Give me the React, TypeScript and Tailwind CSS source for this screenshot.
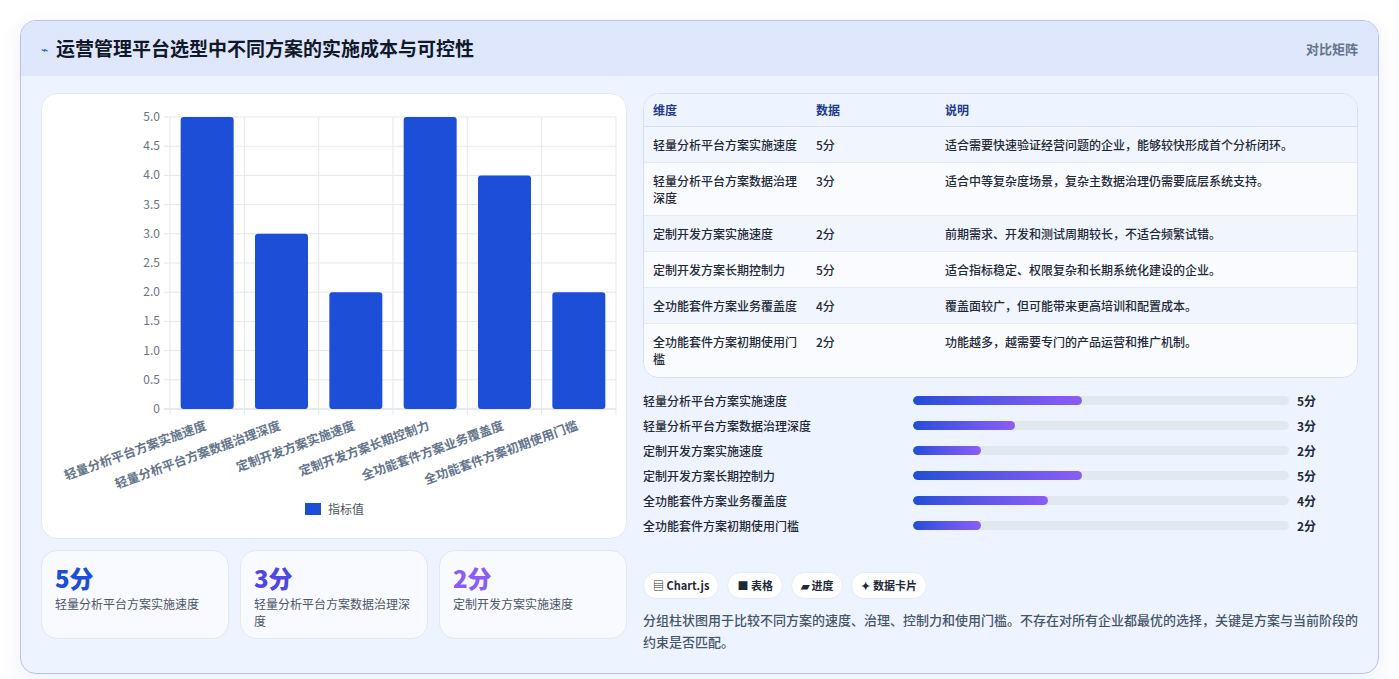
const rows = [
  { name: "轻量分析平台方案实施速度", v: 5, note: "适合需要快速验证经营问题的企业，能够较快形成首个分析闭环。" },
  { name: "轻量分析平台方案数据治理深度", v: 3, note: "适合中等复杂度场景，复杂主数据治理仍需要底层系统支持。" },
  { name: "定制开发方案实施速度", v: 2, note: "前期需求、开发和测试周期较长，不适合频繁试错。" },
  { name: "定制开发方案长期控制力", v: 5, note: "适合指标稳定、权限复杂和长期系统化建设的企业。" },
  { name: "全功能套件方案业务覆盖度", v: 4, note: "覆盖面较广，但可能带来更高培训和配置成本。" },
  { name: "全功能套件方案初期使用门槛", v: 2, note: "功能越多，越需要专门的产品运营和推广机制。" },
];

const font = { fontFamily: '"Noto Sans CJK SC", "Liberation Sans", sans-serif' };

function Chart() {
  const x0 = 128, x1 = 574, y0 = 23, y1 = 315;
  const cw = (x1 - x0) / 6;
  const ticks = [0, 0.5, 1, 1.5, 2, 2.5, 3, 3.5, 4, 4.5, 5];
  const yy = (v: number) => y1 - (v / 5) * (y1 - y0);
  return (
    <svg width="586" height="445" style={font}>
      {ticks.map((t) => (
        <g key={t}>
          <line x1={x0 - 6} x2={x1} y1={yy(t)} y2={yy(t)} stroke={t === 0 ? "#cbd5e1" : "#e5e7eb"} />
          <text x={x0 - 10} y={yy(t) + 4} fontSize="12" fill="#6b7280" textAnchor="end">{t === 0 ? "0" : t.toFixed(1)}</text>
        </g>
      ))}
      {Array.from({ length: 7 }).map((_, i) => (
        <line key={i} x1={x0 + i * cw} x2={x0 + i * cw} y1={y0} y2={y1 + 6} stroke="#e5e7eb" />
      ))}
      {rows.map((r, i) => {
        const cx = x0 + cw * i + cw / 2;
        return (
          <g key={r.name}>
            <rect x={cx - 26.5} y={yy(r.v)} width="53" height={y1 - yy(r.v)} rx="3" fill="#1d4ed8" />
            <text x={cx} y={y1 + 20} fontSize="12.5" fontWeight="600" fill="#64748b" textAnchor="end" transform={`rotate(-20 ${cx} ${y1 + 20})`}>{r.name}</text>
          </g>
        );
      })}
      <rect x="263" y="409" width="16" height="12" fill="#1d4ed8" />
      <text x="286" y="420" fontSize="12" fill="#4b5563">指标值</text>
    </svg>
  );
}

export default function App() {
  const stats = [
    { v: "5分", c: "text-[#1d4ed8]", l: "轻量分析平台方案实施速度" },
    { v: "3分", c: "text-[#4f46e5]", l: "轻量分析平台方案数据治理深度" },
    { v: "2分", c: "text-[#8b5cf6]", l: "定制开发方案实施速度" },
  ];
  return (
    <div className="min-h-[679px] bg-white p-5" style={font}>
      <div className="rounded-2xl border border-[#b6c3ee] bg-[#eef4ff] overflow-hidden shadow-[0_8px_24px_rgba(30,64,175,0.08)]">
        <div className="h-[55px] bg-[#dfe7fd] flex items-center justify-between px-5">
          <div className="flex items-center gap-2">
            <span className="text-[#1d4ed8] text-xs">⌁</span>
            <h1 className="text-[19px] font-bold text-[#111827]">运营管理平台选型中不同方案的实施成本与可控性</h1>
          </div>
          <span className="text-[13px] text-[#64748b] font-semibold">对比矩阵</span>
        </div>
        <div className="flex gap-4 px-5 pt-[17px] pb-5">
          <div className="w-[586px] flex flex-col gap-[11px]">
            <div className="bg-white rounded-2xl border border-[#e2e8f0] h-[446px]">
              <Chart />
            </div>
            <div className="grid grid-cols-3 gap-[11px]">
              {stats.map((s) => (
                <div key={s.v} className="bg-[#f8faff] rounded-2xl border border-[#e2e8f0] h-[89px] px-[13px] pt-3">
                  <div className={`text-[24px] font-extrabold leading-[30px] ${s.c}`}>{s.v}</div>
                  <div className="text-xs text-[#4b5563] leading-[17px] mt-[2px]">{s.l}</div>
                </div>
              ))}
            </div>
          </div>
          <div className="flex-1 flex flex-col">
            <div className="rounded-2xl border border-[#d7def0] overflow-hidden bg-white text-xs">
              <div className="flex h-[33px] items-center bg-[#eef4ff] border-b border-[#d7def0] font-bold text-[#1e3a8a]">
                <div className="w-[172px] pl-[9px]">维度</div>
                <div className="w-[129px]">数据</div>
                <div>说明</div>
              </div>
              {rows.map((r, i) => (
                <div key={r.name} className={`flex py-[9px] leading-[17px] text-[#1f2937] font-medium border-b border-[#e5eaf5] last:border-b-0 ${i % 2 === 0 ? "bg-[#f1f5fe]" : "bg-[#f9fbff]"} ${i === 5 ? "pb-[10px]" : ""}`}>
                  <div className="w-[172px] pl-[9px] pr-3">{r.name}</div>
                  <div className="w-[129px]">{r.v}分</div>
                  <div className="flex-1">{r.note}</div>
                </div>
              ))}
            </div>
            <div className="mt-[10px] flex flex-col">
              {rows.map((r) => (
                <div key={r.name} className="flex items-center h-[25px] text-xs font-medium text-[#1f2937]">
                  <div className="w-[270px]">{r.name}</div>
                  <div className="w-[376px] h-[9px] rounded-full bg-[#e2e8f0] overflow-hidden">
                    <div className="h-full rounded-full bg-gradient-to-r from-[#1d4ed8] to-[#8b5cf6]" style={{ width: `${r.v * 9}%` }} />
                  </div>
                  <div className="ml-2 font-bold">{r.v}分</div>
                </div>
              ))}
            </div>
            <div className="mt-[34px] flex gap-2 text-[11px] font-bold text-[#1f2937]">
              {["▤ Chart.js", "■ 表格", "▰ 进度", "✦ 数据卡片"].map((c) => (
                <span key={c} className="bg-white border border-[#e5eaf5] rounded-full px-[9px] h-[27px] flex items-center">{c}</span>
              ))}
            </div>
            <p className="mt-[10px] text-[13px] leading-[22px] text-[#475569] font-medium">
              分组柱状图用于比较不同方案的速度、治理、控制力和使用门槛。不存在对所有企业都最优的选择，关键是方案与当前阶段的约束是否匹配。
            </p>
          </div>
        </div>
      </div>
    </div>
  );
}
